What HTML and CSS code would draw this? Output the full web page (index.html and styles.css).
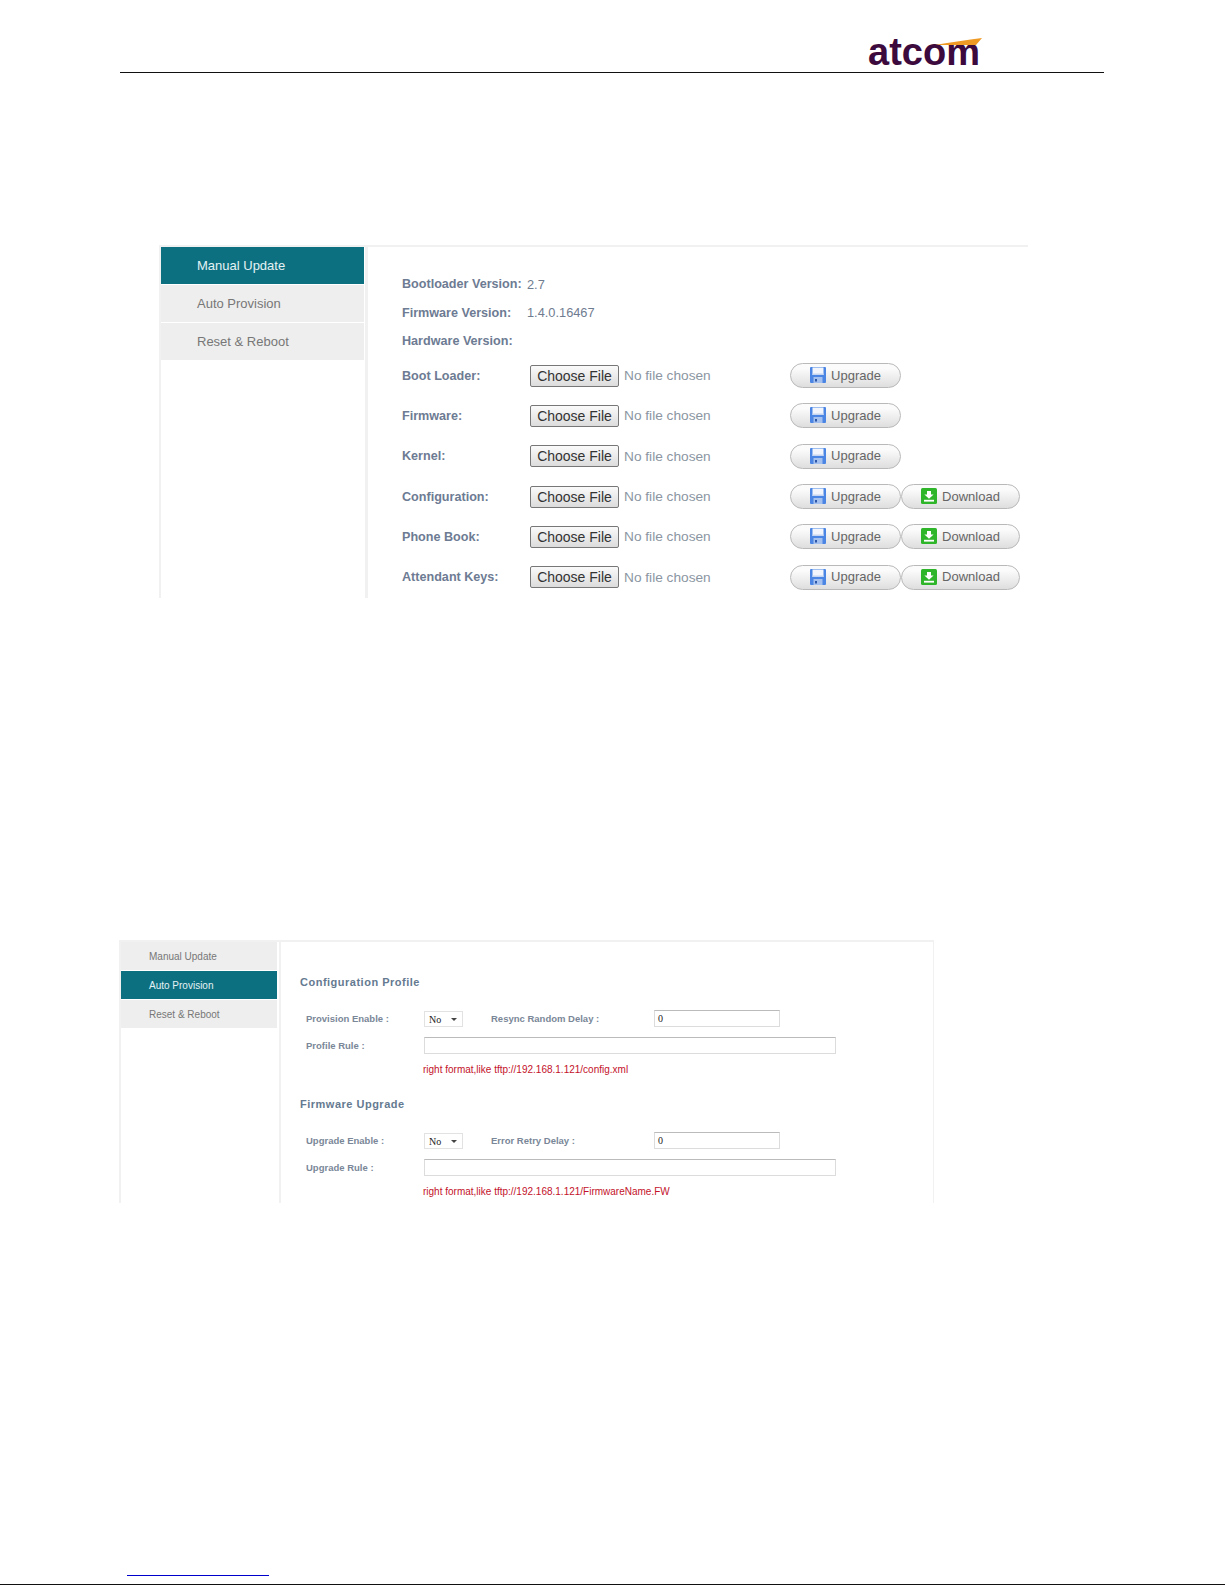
FILE: index.html
```html
<!DOCTYPE html>
<html lang="en">
<head>
<meta charset="utf-8">
<title>atcom</title>
<link rel="stylesheet" href="styles.css">
</head>
<body>
<svg class="defs" width="0" height="0" aria-hidden="true">
  <symbol id="floppy" viewBox="0 0 16 16">
    <rect x="0" y="0" width="16" height="16" rx="1" fill="#4c86e4"/>
    <rect x="2.500" y="0.500" width="11" height="7.500" fill="#f2f5fb"/>
    <rect x="2.500" y="6.500" width="11" height="1.500" fill="#c6d6f0"/>
    <rect x="3.500" y="10" width="9" height="6" fill="#a3c0ee"/>
    <rect x="5" y="12" width="2" height="2.500" fill="#2c57a8"/>
  </symbol>
  <symbol id="dl" viewBox="0 0 16 16">
    <rect x="0" y="0" width="16" height="16" rx="1.500" fill="#2fb52a"/>
    <path d="M6 3h4v3.500h2.600L8 10.800 3.400 6.500H6z" fill="#fff"/>
    <rect x="3" y="11.800" width="10" height="1.800" fill="#fff"/>
  </symbol>
</svg>

<header class="page-head">
  <div class="logo">
    <span class="logo-word">atcom</span>
    <svg class="logo-swoosh" width="48" height="8" viewBox="0 0 48 8"><path d="M0 7 C16 4 32 2 47 0 L41 7Z" fill="#ef9a24"/></svg>
  </div>
</header>

<section class="panel panel-a">
  <nav class="side side-a">
    <a class="side-item active">Manual Update</a>
    <a class="side-item">Auto Provision</a>
    <a class="side-item">Reset &amp; Reboot</a>
  </nav>
  <div class="main main-a">
    <div class="info-row"><span class="lbl info-lbl">Bootloader Version:</span><span class="val">2.7</span></div>
    <div class="info-row"><span class="lbl info-lbl">Firmware Version:</span><span class="val">1.4.0.16467</span></div>
    <div class="info-row"><span class="lbl info-lbl">Hardware Version:</span></div>

    <div class="file-row"><span class="lbl">Boot Loader:</span><div class="picker"><button class="choose">Choose File</button><span class="none">No file chosen</span></div><div class="acts"><button class="pill up"><svg class="ico"><use href="#floppy"/></svg>Upgrade</button></div></div>
    <div class="file-row"><span class="lbl">Firmware:</span><div class="picker"><button class="choose">Choose File</button><span class="none">No file chosen</span></div><div class="acts"><button class="pill up"><svg class="ico"><use href="#floppy"/></svg>Upgrade</button></div></div>
    <div class="file-row"><span class="lbl">Kernel:</span><div class="picker"><button class="choose">Choose File</button><span class="none">No file chosen</span></div><div class="acts"><button class="pill up"><svg class="ico"><use href="#floppy"/></svg>Upgrade</button></div></div>
    <div class="file-row"><span class="lbl">Configuration:</span><div class="picker"><button class="choose">Choose File</button><span class="none">No file chosen</span></div><div class="acts"><button class="pill up"><svg class="ico"><use href="#floppy"/></svg>Upgrade</button><button class="pill down"><svg class="ico"><use href="#dl"/></svg>Download</button></div></div>
    <div class="file-row"><span class="lbl">Phone Book:</span><div class="picker"><button class="choose">Choose File</button><span class="none">No file chosen</span></div><div class="acts"><button class="pill up"><svg class="ico"><use href="#floppy"/></svg>Upgrade</button><button class="pill down"><svg class="ico"><use href="#dl"/></svg>Download</button></div></div>
    <div class="file-row"><span class="lbl">Attendant Keys:</span><div class="picker"><button class="choose">Choose File</button><span class="none">No file chosen</span></div><div class="acts"><button class="pill up"><svg class="ico"><use href="#floppy"/></svg>Upgrade</button><button class="pill down"><svg class="ico"><use href="#dl"/></svg>Download</button></div></div>
  </div>
</section>

<section class="panel panel-b">
  <nav class="side side-b">
    <a class="side-item">Manual Update</a>
    <a class="side-item active">Auto Provision</a>
    <a class="side-item">Reset &amp; Reboot</a>
  </nav>
  <div class="main main-b">
    <h3 class="sec-title">Configuration Profile</h3>
    <div class="form-row"><span class="flbl">Provision Enable :</span><span class="sel">No</span><span class="flbl">Resync Random Delay :</span><span class="txt">0</span></div>
    <div class="form-row"><span class="flbl">Profile Rule :</span><span class="txt wide"></span></div>
    <p class="hint">right format,like tftp://192.168.1.121/config.xml</p>
    <h3 class="sec-title">Firmware Upgrade</h3>
    <div class="form-row"><span class="flbl">Upgrade Enable :</span><span class="sel">No</span><span class="flbl">Error Retry Delay :</span><span class="txt">0</span></div>
    <div class="form-row"><span class="flbl">Upgrade Rule :</span><span class="txt wide"></span></div>
    <p class="hint">right format,like tftp://192.168.1.121/FirmwareName.FW</p>
  </div>
</section>

<footer class="page-foot">
  <a class="foot-link"></a>
</footer>
</body>
</html>
```
FILE: styles.css
```css
* { box-sizing: border-box; }
html, body { margin: 0; padding: 0; }
body {
  width: 1225px;
  height: 1585px;
  overflow: hidden;
  background: #fff;
  font-family: "Liberation Sans", Arial, sans-serif;
}
.defs { position: absolute; }

/* page header */
.page-head {
  margin-left: 120px;
  width: 984px;
  height: 73px;
  border-bottom: 1px solid #111;
  padding: 32px 0 0 748px;
}
.logo { position: relative; width: 114px; height: 40px; }
.logo-word {
  display: block;
  font-size: 38px;
  line-height: 40px;
  font-weight: 700;
  color: #3c0a3d;
}
.logo-swoosh { position: absolute; left: 67px; top: 6px; }

/* shared panel */
.panel {
  display: flex;
  overflow: hidden;
  border-top: 2px solid #f1f1f1;
  border-left: 2px solid #f1f1f1;
}
.panel-a { margin: 172px 0 0 159px; width: 869px; height: 353px; }
.panel-b { margin: 342px 0 0 119px; width: 815px; height: 263px; border-right: 1px solid #f1f1f1; }

.side { display: flex; flex-direction: column; flex: none; }
.side-a { width: 203px; gap: 1px; }
.side-b { width: 156px; }
.side-item { display: flex; align-items: center; background: #eeeeee; color: #777; }
.side-a .side-item { height: 37px; padding-left: 36px; font-size: 13px; }
.side-b .side-item { height: 29px; padding-left: 28px; font-size: 10px; border-bottom: 1px solid #fff; }
.side-item.active { background: #0d7081; color: #e4f2f4; }

.main { flex: 1; min-width: 0; }
.main-a { margin-left: 1px; border-left: 3px solid #f1f1f1; padding: 23px 0 0 34px; }
.main-b { margin-left: 2px; border-left: 2px solid #f1f1f1; padding: 27px 0 0 19px; }

/* first panel content */
.lbl { font-size: 12.6px; font-weight: 700; color: #6d7b93; }
.info-row { display: flex; align-items: center; height: 28.500px; }
.info-lbl { width: 125px; }
.val { font-size: 12.8px; color: #6f7c90; }
.file-row { display: flex; align-items: center; height: 40.300px; }
.file-row .lbl { width: 128px; flex: none; }
.picker { width: 260px; flex: none; display: flex; align-items: center; gap: 5px; }
.choose {
  width: 89px;
  height: 22px;
  padding: 0;
  font: 14px "Liberation Sans", Arial, sans-serif;
  color: #333;
  background: linear-gradient(#fafafa, #dcdcdc);
  border: 1px solid #777;
  border-radius: 2px;
}
.none { font-size: 13.700px; color: #8b96a2; }
.acts { display: flex; }
.pill {
  display: flex;
  align-items: center;
  justify-content: center;
  height: 25px;
  padding: 0 0 1px;
  gap: 5px;
  font: 13px "Liberation Sans", Arial, sans-serif;
  color: #666;
  background: linear-gradient(#fbfbfb 20%, #dedede);
  border: 1px solid #b9b9b9;
  border-radius: 13px;
}
.pill.up { width: 111px; }
.pill.down { width: 119px; }
.ico { width: 16px; height: 16px; flex: none; }

/* second panel content */
.sec-title {
  margin: 0 0 10px;
  height: 26px;
  line-height: 26px;
  font-size: 11px;
  font-weight: 700;
  letter-spacing: .5px;
  color: #657a90;
}
.form-row { display: flex; align-items: center; height: 27px; padding-left: 6px; }
.flbl { font-size: 9.500px; font-weight: 700; color: #7a8798; flex: none; }
.form-row .flbl:first-child { width: 118px; }
.form-row .flbl:nth-child(3) { width: 163px; }
.sel {
  position: relative;
  width: 39px;
  height: 16px;
  margin-right: 28px;
  padding-left: 4px;
  flex: none;
  font: 10px/15px "Liberation Serif", serif;
  color: #222;
  background: #fff;
  border: 1px solid #e2e2e2;
}
.sel::after {
  content: "";
  position: absolute;
  right: 5px;
  top: 6px;
  border: 3px solid transparent;
  border-top-color: #444;
  border-bottom: 0;
}
.txt {
  width: 126px;
  height: 17px;
  padding-left: 3px;
  flex: none;
  font: 10px/15px "Liberation Serif", serif;
  color: #222;
  background: #fff;
  border: 1px solid #dcdcdc;
  border-top-color: #bbb;
}
.txt.wide { width: 412px; }
.hint {
  margin: 0 0 10px;
  height: 22px;
  line-height: 22px;
  padding-left: 123px;
  font-size: 10px;
  color: #c3122a;
}

/* footer */
.page-foot {
  margin-top: 372px;
  height: 10px;
  padding-left: 127px;
  border-bottom: 1px solid #111;
}
.foot-link { display: block; width: 142px; border-top: 1px solid #0000cc; }
```
